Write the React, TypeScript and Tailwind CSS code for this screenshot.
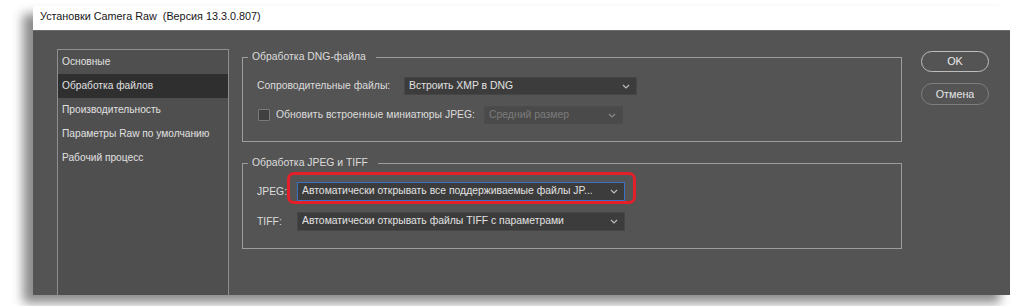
import React from 'react';

const font = { fontFamily: '"Liberation Sans", "DejaVu Sans", sans-serif' };

const sections = [
  'Основные',
  'Обработка файлов',
  'Производительность',
  'Параметры Raw по умолчанию',
  'Рабочий процесс',
];

const Chevron: React.FC<{ dim?: boolean }> = ({ dim }) => (
  <svg width="8" height="5" viewBox="0 0 8 5" className="flex-none">
    <polyline
      points="1,1 4,4 7,1"
      fill="none"
      stroke={dim ? '#8a8a8a' : '#bdbdbd'}
      strokeWidth="1.2"
    />
  </svg>
);

interface SelectProps {
  value: string;
  width: string;
  height?: string;
  disabled?: boolean;
  focused?: boolean;
}

const Select: React.FC<SelectProps> = ({ value, width, height = 'h-[18px]', disabled, focused }) => (
  <div
    className={`${width} ${height} flex-none flex items-center justify-between pl-[4px] pr-[6px] border ${
      focused ? 'border-[#3b6fc4]' : disabled ? 'border-[#4c4c4c]' : 'border-[#464646]'
    } ${disabled ? 'bg-[#4a4a4a] text-[#7c7c7c]' : 'bg-[#3c3c3c] text-[#e2e2e2]'} text-[10.4px] leading-none whitespace-nowrap`}
  >
    <span className="truncate">{value}</span>
    <Chevron dim={disabled} />
  </div>
);

const Group: React.FC<{ title: string; className?: string; children: React.ReactNode }> = ({
  title,
  className = '',
  children,
}) => (
  <fieldset className={`border border-[#9d9d9d] px-[14px] pb-[17px] ${className}`}>
    <legend className="-ml-[9px] pl-[4px] pr-[10px] text-[10.4px] leading-[14px] text-[#dcdcdc]">
      {title}
    </legend>
    {children}
  </fieldset>
);

const App: React.FC = () => {
  return (
    <div className="w-[1024px] h-[306px] bg-white pt-[6px] pl-[33px] overflow-hidden" style={font}>
      <div className="w-[977px] flex flex-col shadow-[-10px_8px_10px_rgba(0,0,0,0.45)]">
        <div className="h-[24px] bg-white flex items-center pl-[7px] pb-[4px] text-[10.8px] text-[#161616]">
          Установки Camera Raw&nbsp;&nbsp;(Версия 13.3.0.807)
        </div>

        <div className="h-[265px] bg-[#545454] border-t border-[#6b6b6b] flex pt-[18px] pl-[24px]">
          {/* left list */}
          <div className="w-[172px] flex-none border-l border-t border-r border-[#8f8f8f] bg-[#4f4f4f]">
            {sections.map((s, i) => (
              <div
                key={s}
                className={`h-[24px] flex items-center pl-[4px] text-[10.2px] text-[#e0e0e0] whitespace-nowrap ${
                  i === 1 ? 'bg-[#2f2f2f]' : ''
                }`}
              >
                {s}
              </div>
            ))}
          </div>

          {/* settings */}
          <div className="flex-none w-[673px] pl-[13px] pt-[1px]">
            <Group title="Обработка DNG-файла">
              <div className="mt-[13px] h-[18px] flex items-center text-[10.4px] text-[#dcdcdc] whitespace-nowrap">
                <span className="w-[147px] flex-none">Сопроводительные файлы:</span>
                <Select value="Встроить XMP в DNG" width="w-[233px]" />
              </div>
              <div className="mt-[11px] h-[18px] flex items-center text-[10.4px] text-[#dcdcdc] whitespace-nowrap">
                <span className="ml-[1px] w-[12px] h-[12px] flex-none border border-[#7a7a7a] bg-[#404040] rounded-[1px]" />
                <span className="ml-[6px] w-[208px] flex-none">Обновить встроенные миниатюры JPEG:</span>
                <Select value="Средний размер" width="w-[139px]" disabled />
              </div>
            </Group>

            <Group title="Обработка JPEG и TIFF" className="mt-[14px]">
              <div className="mt-[12px] h-[19px] flex items-center text-[10.4px] text-[#dcdcdc] whitespace-nowrap">
                <span className="w-[40px] flex-none">JPEG:</span>
                <div className="relative flex-none">
                  <Select
                    value="Автоматически открывать все поддерживаемые файлы JP..."
                    width="w-[328px]"
                    height="h-[19px]"
                    focused
                  />
                  <span className="absolute -left-[10px] -right-[11px] -top-[10px] -bottom-[3px] border-[3px] border-[#e3202a] rounded-[7px] pointer-events-none" />
                </div>
              </div>
              <div className="mt-[11px] h-[19px] flex items-center text-[10.4px] text-[#dcdcdc] whitespace-nowrap">
                <span className="w-[40px] flex-none">TIFF:</span>
                <Select
                  value="Автоматически открывать файлы TIFF с параметрами"
                  width="w-[328px]"
                  height="h-[19px]"
                />
              </div>
            </Group>
          </div>

          {/* buttons */}
          <div className="flex-none w-[68px] ml-[19px] pt-[2px] flex flex-col">
            <button className="h-[21px] rounded-full border-[1.5px] border-[#bdbdbd] text-[10.8px] text-[#ececec]">
              OK
            </button>
            <button className="mt-[11px] h-[22px] rounded-full border border-[#7d7d7d] text-[10.8px] text-[#e4e4e4]">
              Отмена
            </button>
          </div>
        </div>
      </div>
    </div>
  );
};

export default App;
